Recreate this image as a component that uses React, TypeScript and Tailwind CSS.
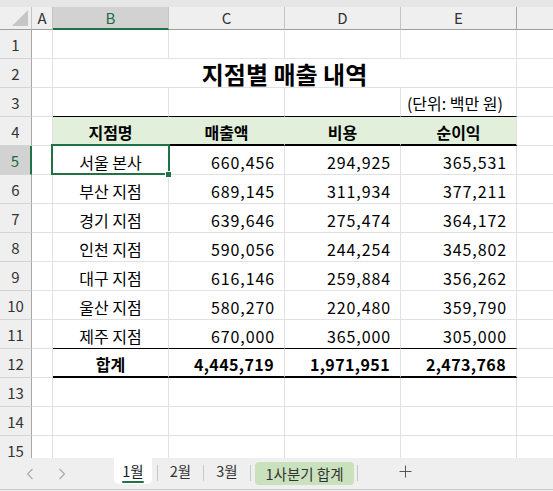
import React from "react";

const GRID = "border-[#e1e1e1]";

type DataRow = { name: string; c: string; d: string; e: string };

const rows: DataRow[] = [
  { name: "서울 본사", c: "660,456", d: "294,925", e: "365,531" },
  { name: "부산 지점", c: "689,145", d: "311,934", e: "377,211" },
  { name: "경기 지점", c: "639,646", d: "275,474", e: "364,172" },
  { name: "인천 지점", c: "590,056", d: "244,254", e: "345,802" },
  { name: "대구 지점", c: "616,146", d: "259,884", e: "356,262" },
  { name: "울산 지점", c: "580,270", d: "220,480", e: "359,790" },
  { name: "제주 지점", c: "670,000", d: "365,000", e: "305,000" },
];

function RowHeader({ n, selected }: { n: number; selected?: boolean }) {
  return selected ? (
    <div className="w-[32px] shrink-0 flex items-center justify-center bg-[#d2d2d2] border-r-2 border-b border-r-[#217346] border-b-[#d4d4d4] text-[15px] text-[#1c6b3f] pt-[2px]">
      {n}
    </div>
  ) : (
    <div className="w-[32px] shrink-0 flex items-center justify-center bg-[#efefef] border-r border-b border-r-[#a6a6a6] border-b-[#d4d4d4] text-[15px] text-[#333] pt-[2px]">
      {n}
    </div>
  );
}

function ACell() {
  return <div className={`w-[21px] shrink-0 border-r border-b ${GRID}`} />;
}

function FCell() {
  return <div className={`flex-1 border-b ${GRID}`} />;
}

function EmptyRow({ n }: { n: number }) {
  return (
    <div className="flex h-[29px] shrink-0">
      <RowHeader n={n} />
      <ACell />
      <div className={`w-[116px] shrink-0 border-r border-b ${GRID}`} />
      <div className={`w-[116px] shrink-0 border-r border-b ${GRID}`} />
      <div className={`w-[116px] shrink-0 border-r border-b ${GRID}`} />
      <div className={`w-[116px] shrink-0 border-r border-b ${GRID}`} />
      <FCell />
    </div>
  );
}

function ChevronL() {
  return (
    <svg width="8" height="12" viewBox="0 0 8 12" fill="none">
      <path d="M6.5 1 L1.5 6 L6.5 11" stroke="#a8a8a8" strokeWidth="1.1" />
    </svg>
  );
}
function ChevronR() {
  return (
    <svg width="8" height="12" viewBox="0 0 8 12" fill="none">
      <path d="M1.5 1 L6.5 6 L1.5 11" stroke="#a8a8a8" strokeWidth="1.1" />
    </svg>
  );
}

export default function App() {
  return (
    <div className="w-[553px] h-[491px] flex flex-col bg-white overflow-hidden font-['Noto_Sans_CJK_KR','Noto_Sans',sans-serif] text-black">
      <div className="h-[7px] shrink-0 bg-[#e6e6e6]" />
      <div className="h-[451px] shrink-0 overflow-hidden flex flex-col">
        {/* column headers */}
        <div className="flex h-[23px] shrink-0 bg-[#efefef] text-[15px] text-[#333]">
          <div className="w-[32px] shrink-0 border-r border-b border-r-[#c4c4c4] border-b-[#9e9e9e] flex items-end justify-end pr-[3px] pb-[3px]">
            <svg width="16" height="16" viewBox="0 0 16 16">
              <polygon points="16,0 16,16 0,16" fill="#c6c6c6" />
            </svg>
          </div>
          <div className="w-[21px] shrink-0 border-r border-b border-r-[#c4c4c4] border-b-[#9e9e9e] flex items-center justify-center">
            A
          </div>
          <div className="w-[116px] shrink-0 bg-[#d2d2d2] border-r border-b-2 border-r-[#c4c4c4] border-b-[#217346] flex items-center justify-center text-[#1c6b3f] pt-[1px]">
            B
          </div>
          <div className="w-[116px] shrink-0 border-r border-b border-r-[#c4c4c4] border-b-[#9e9e9e] flex items-center justify-center">
            C
          </div>
          <div className="w-[116px] shrink-0 border-r border-b border-r-[#c4c4c4] border-b-[#9e9e9e] flex items-center justify-center">
            D
          </div>
          <div className="w-[116px] shrink-0 border-r border-b border-r-[#a6a6a6] border-b-[#9e9e9e] flex items-center justify-center">
            E
          </div>
          <div className="flex-1 border-b border-b-[#9e9e9e]" />
        </div>

        <EmptyRow n={1} />

        {/* row 2: title */}
        <div className="flex h-[29px] shrink-0">
          <RowHeader n={2} />
          <ACell />
          <div className={`w-[464px] shrink-0 border-r border-b ${GRID} flex items-center justify-center text-[24px] font-bold pt-[1px]`}>
            지점별 매출 내역
          </div>
          <FCell />
        </div>

        {/* row 3: unit */}
        <div className="flex h-[29px] shrink-0">
          <RowHeader n={3} />
          <ACell />
          <div className="w-[116px] shrink-0 border-r border-b border-r-[#e1e1e1] border-b-black" />
          <div className="w-[116px] shrink-0 border-r border-b border-r-[#e1e1e1] border-b-black" />
          <div className="w-[116px] shrink-0 border-r border-b border-r-[#e1e1e1] border-b-black" />
          <div className="w-[116px] shrink-0 border-r border-b border-r-[#e1e1e1] border-b-black flex items-center justify-end pr-[13px] text-[16px] pt-[2px]">
            (단위: 백만 원)
          </div>
          <FCell />
        </div>

        {/* row 4: table header */}
        <div className="flex h-[29px] shrink-0">
          <RowHeader n={4} />
          <ACell />
          <div className="w-[116px] shrink-0 bg-[#e2efda] border-r border-b-2 border-r-[#e2efda] border-b-black flex items-center justify-center text-[16px] font-bold pt-[2px]">
            지점명
          </div>
          <div className="w-[116px] shrink-0 bg-[#e2efda] border-r border-b-2 border-r-[#e2efda] border-b-black flex items-center justify-center text-[16px] font-bold pt-[2px]">
            매출액
          </div>
          <div className="w-[116px] shrink-0 bg-[#e2efda] border-r border-b-2 border-r-[#e2efda] border-b-black flex items-center justify-center text-[16px] font-bold pt-[2px]">
            비용
          </div>
          <div className="w-[116px] shrink-0 bg-[#e2efda] border-r border-b-2 border-r-[#e1e1e1] border-b-black flex items-center justify-center text-[16px] font-bold pt-[2px]">
            순이익
          </div>
          <FCell />
        </div>

        {/* data rows 5-11 */}
        {rows.map((r, i) => {
          const n = i + 5;
          const last = n === 11;
          const bb = last ? "border-b-black" : "border-b-[#e1e1e1]";
          return (
            <div key={n} className="flex h-[29px] shrink-0">
              <RowHeader n={n} selected={n === 5} />
              <ACell />
              <div className={`relative w-[116px] shrink-0 border-r border-b border-r-[#e1e1e1] ${bb} flex items-center justify-center text-[16px] pt-[3px]`}>
                {r.name}
                {n === 5 && (
                  <>
                    <div className="absolute left-[-2px] top-[-2px] w-[119px] h-[31px] border-2 border-[#217346] z-10" />
                    <div className="absolute left-[112px] top-[25px] w-[7px] h-[7px] bg-[#217346] border border-white z-20" />
                  </>
                )}
              </div>
              <div className={`w-[116px] shrink-0 border-r border-b border-r-[#e1e1e1] ${bb} flex items-center justify-end pr-[9px] text-[16px] tracking-[0.9px] pt-[3px]`}>
                {r.c}
              </div>
              <div className={`w-[116px] shrink-0 border-r border-b border-r-[#e1e1e1] ${bb} flex items-center justify-end pr-[9px] text-[16px] tracking-[0.9px] pt-[3px]`}>
                {r.d}
              </div>
              <div className={`w-[116px] shrink-0 border-r border-b border-r-[#e1e1e1] ${bb} flex items-center justify-end pr-[9px] text-[16px] tracking-[0.9px] pt-[3px]`}>
                {r.e}
              </div>
              <FCell />
            </div>
          );
        })}

        {/* row 12: totals */}
        <div className="flex h-[29px] shrink-0">
          <RowHeader n={12} />
          <ACell />
          <div className="w-[116px] shrink-0 border-r border-b-2 border-r-[#e1e1e1] border-b-black flex items-center justify-center text-[16px] font-bold pt-[2px]">
            합계
          </div>
          <div className="w-[116px] shrink-0 border-r border-b-2 border-r-[#e1e1e1] border-b-black flex items-center justify-end pr-[10px] text-[16px] font-bold tracking-[0.4px] pt-[2px]">
            4,445,719
          </div>
          <div className="w-[116px] shrink-0 border-r border-b-2 border-r-[#e1e1e1] border-b-black flex items-center justify-end pr-[10px] text-[16px] font-bold tracking-[0.4px] pt-[2px]">
            1,971,951
          </div>
          <div className="w-[116px] shrink-0 border-r border-b-2 border-r-[#e1e1e1] border-b-black flex items-center justify-end pr-[10px] text-[16px] font-bold tracking-[0.4px] pt-[2px]">
            2,473,768
          </div>
          <FCell />
        </div>

        <EmptyRow n={13} />
        <EmptyRow n={14} />
        <EmptyRow n={15} />
      </div>

      {/* sheet tabs */}
      <div className="h-[31px] shrink-0 bg-[#efefef] flex items-start text-[14.5px] text-[#333]">
        <div className="w-[114px] shrink-0 h-full flex items-center pl-[26px] gap-[24px] pt-[1px]">
          <ChevronL />
          <ChevronR />
        </div>
        <div className="w-[38px] h-[26px] shrink-0 bg-white rounded-b-[5px] flex flex-col items-center">
          <span className="mt-[3px] leading-[20px] text-[#1a1a1a]">1월</span>
          <div className="w-[22px] h-[2px] rounded-full bg-[#217346] mt-auto mb-[1px]" />
        </div>
        <div className="ml-[5px] mt-[7px] w-px h-[16px] bg-[#c8c8c8] shrink-0" />
        <div className="w-[45px] h-[26px] shrink-0 flex items-center justify-center">2월</div>
        <div className="mt-[7px] w-px h-[16px] bg-[#c8c8c8] shrink-0" />
        <div className="w-[46px] h-[26px] shrink-0 flex items-center justify-center">3월</div>
        <div className="mt-[7px] w-px h-[16px] bg-[#c8c8c8] shrink-0" />
        <div className="ml-[4px] mt-[4px] w-[99px] h-[23px] shrink-0 rounded-[4px] bg-[#c9e2bd] flex items-center justify-center">
          1사분기 합계
        </div>
        <div className="ml-[3px] mt-[7px] w-px h-[16px] bg-[#c8c8c8] shrink-0" />
        <div className="w-[94px] h-[26px] shrink-0 flex items-center justify-center">
          <svg width="13" height="13" viewBox="0 0 13 13">
            <path d="M6.5 0.5 V12.5 M0.5 6.5 H12.5" stroke="#555" strokeWidth="1" />
          </svg>
        </div>
      </div>
      <div className="h-px shrink-0 bg-[#c8c8c8]" />
      <div className="h-px shrink-0 bg-[#efefef]" />
    </div>
  );
}
